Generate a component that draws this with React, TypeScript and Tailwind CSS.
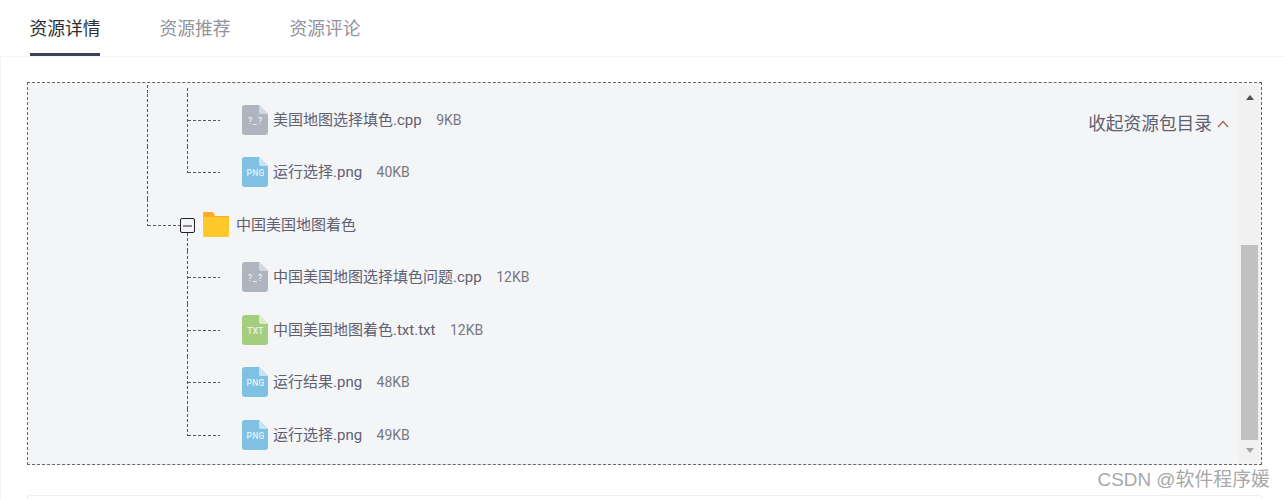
import React from 'react';

const fontStack = '[font-family:"Noto_Sans","Noto_Sans_CJK_SC",sans-serif]';
const listFont = '[font-family:"Roboto","Noto_Sans_CJK_SC",sans-serif]';

const tabs = ['资源详情', '资源推荐', '资源评论'];

type Kind = 'cpp' | 'png' | 'txt';

const hLine = 'h-px bg-[repeating-linear-gradient(90deg,#555666_0_3px,transparent_3px_5px)]';
const vLine = 'w-px bg-[repeating-linear-gradient(180deg,#555666_0_3px,transparent_3px_5px)]';

function FileIcon({ kind }: { kind: Kind }) {
    const colors = {
        cpp: { body: '#aeb5bf', fold: '#d5d9df', label: '?_?', track: 1 },
        png: { body: '#7fc1e3', fold: '#c6e4f3', label: 'PNG', track: 0.2 },
        txt: { body: '#a4cd7e', fold: '#dcecc4', label: 'TXT', track: 0.2 },
    }[kind];
    return (
        <svg width="26" height="30" viewBox="0 0 26 30" className="shrink-0">
            <path d="M3 0H17L26 9V27a3 3 0 0 1-3 3H3a3 3 0 0 1-3-3V3a3 3 0 0 1 3-3Z" fill={colors.body} />
            <path d="M17 0L26 9H19a2 2 0 0 1-2-2Z" fill={colors.fold} />
            <text
                x="13.5"
                y="19"
                textAnchor="middle"
                fontSize="8.5"
                letterSpacing={colors.track}
                fontWeight="500"
                fontFamily="Roboto, sans-serif"
                fill="#ffffff"
                fillOpacity="0.8"
            >
                {colors.label}
            </text>
        </svg>
    );
}

function FolderIcon() {
    return (
        <svg width="26" height="25" viewBox="0 0 26 25" className="shrink-0">
            <path d="M1 0H10L12 4H26V7H0V1a1 1 0 0 1 1-1Z" fill="#ffaa2c" />
            <path d="M0 5H26V24a1 1 0 0 1-1 1H1a1 1 0 0 1-1-1Z" fill="#ffc928" />
        </svg>
    );
}

function FileRow({ kind, name, size, last, outer }: { kind: Kind; name: string; size: string; last?: boolean; outer?: boolean }) {
    return (
        <div className="flex h-[52.5px]">
            <div className="w-[40px] shrink-0">{outer && <div className={`h-full ${vLine}`} />}</div>
            <div className="flex w-[33px] shrink-0">
                <div className={`${vLine} ${last ? 'h-[27px]' : 'h-full'}`} />
                <div className={`mt-[26px] w-[32px] ${hLine}`} />
            </div>
            <div className={`ml-[22px] flex items-center ${listFont}`}>
                <FileIcon kind={kind} />
                <span className="ml-[5px] text-[15px] text-[#5f6070]">{name}</span>
                <span className="ml-[14.5px] pt-[0.5px] text-[14px] text-[#777882]">{size}</span>
            </div>
        </div>
    );
}

function FolderRow({ name }: { name: string }) {
    return (
        <div className="flex h-[52.5px]">
            <div className="flex w-[33px] shrink-0">
                <div className={`h-[27px] ${vLine}`} />
                <div className={`mt-[26px] w-[32px] ${hLine}`} />
            </div>
            <div className="flex w-[15px] shrink-0 flex-col items-center pt-[19.5px]">
                <div className="flex h-[15px] w-[15px] shrink-0 items-center justify-center rounded-[2px] border-[1.5px] border-[#222222] bg-[#f3f4f6]">
                    <div className="h-[2px] w-[9px] bg-[#8a8a8a]" />
                </div>
                <div className={`flex-1 ${vLine}`} />
            </div>
            <div className={`ml-[8px] flex items-center ${listFont}`}>
                <FolderIcon />
                <span className="ml-[7px] text-[15px] text-[#5f6070]">{name}</span>
            </div>
        </div>
    );
}

function Scrollbar() {
    return (
        <div className="my-[3px] mr-px flex w-[22px] shrink-0 flex-col bg-[#f1f1f1] pl-[3px] pr-[2px]">
            <div className="flex h-[22px] shrink-0 items-center justify-center">
                <div className="h-0 w-0 border-x-[4.5px] border-b-[5px] border-x-transparent border-b-[#505050]" />
            </div>
            <div className="mt-[137px] h-[195px] w-[17px] shrink-0 bg-[#c1c1c1]" />
            <div className="flex flex-1 items-center justify-center">
                <div className="h-0 w-0 border-x-[4.5px] border-t-[5px] border-x-transparent border-t-[#a3a3a3]" />
            </div>
        </div>
    );
}

export default function App() {
    return (
        <div className={`relative h-[499px] w-[1285px] overflow-hidden bg-white ${fontStack}`}>
            <div className="flex h-[57px] gap-[60px] border-b border-[#f5f6f7] pl-[30px]">
                {tabs.map((tab, i) => (
                    <div
                        key={tab}
                        className={`flex h-[56px] w-[70px] items-center justify-center whitespace-nowrap border-b-[3px] pt-[3px] text-[17.8px] ${
                            i === 0 ? 'border-[#3d4059] text-[#2e2e33]' : 'border-transparent text-[#92929c]'
                        }`}
                    >
                        {tab}
                    </div>
                ))}
            </div>

            <div className="h-[442px] border-l border-[#f3f4f8] pl-[26px] pr-[23px] pt-[25px]">
                <div className="relative flex h-[383px] border border-dashed border-[#666666] bg-[#f4f5f7]">
                    <div className="min-w-0 flex-1 overflow-hidden pl-[119px]">
                        <div className="flex h-[10.5px]">
                            <div className="mt-[2px] w-[40px]">
                                <div className={`h-full ${vLine}`} />
                            </div>
                            <div className={`mt-[5px] ${vLine}`} />
                        </div>
                        <FileRow kind="cpp" name="美国地图选择填色.cpp" size="9KB" outer />
                        <FileRow kind="png" name="运行选择.png" size="40KB" last outer />
                        <FolderRow name="中国美国地图着色" />
                        <FileRow kind="cpp" name="中国美国地图选择填色问题.cpp" size="12KB" />
                        <FileRow kind="txt" name="中国美国地图着色.txt.txt" size="12KB" />
                        <FileRow kind="png" name="运行结果.png" size="48KB" />
                        <FileRow kind="png" name="运行选择.png" size="49KB" last />
                    </div>
                    <Scrollbar />
                    <div className="absolute right-[32px] top-[27px] flex items-center gap-[5px] whitespace-nowrap text-[17.7px] text-[#5f6070]">
                        收起资源包目录
                        <svg width="12" height="8" viewBox="0 0 12 8" fill="none" className="mt-[2px]">
                            <path d="M1 7L6 1.5L11 7" stroke="#a0604f" strokeWidth="1.2" />
                        </svg>
                    </div>
                </div>
            </div>

            <div className="absolute left-[27px] top-[495px] h-[10px] w-[1235px] rounded-t-[3px] border border-[#f0f0f2]" />
            <div className='absolute right-[15px] top-[466px] whitespace-nowrap text-[18.9px] text-[#a8a8a8] [font-family:"Liberation_Sans","Noto_Sans_CJK_SC",sans-serif]'>
                CSDN @软件程序媛
            </div>
        </div>
    );
}
